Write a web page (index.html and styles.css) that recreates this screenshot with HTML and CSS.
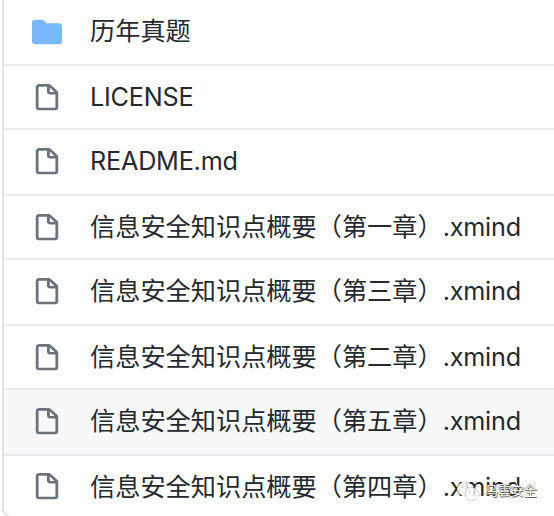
FILE: index.html
```
<!DOCTYPE html>
<html lang="zh-CN">
<head>
<meta charset="utf-8">
<title>Files</title>
<link rel="stylesheet" href="styles.css">
</head>
<body>
<svg class="defs" aria-hidden="true">
<symbol id="file" viewBox="0 0 16 16" preserveAspectRatio="none"><path d="M3.75 1.5a.25.25 0 00-.25.25v11.5c0 .138.112.25.25.25h8.5a.25.25 0 00.25-.25V6H9.75A1.75 1.75 0 018 4.25V1.5H3.75zm5.75.56v2.19c0 .138.112.25.25.25h2.19L9.5 2.06zM2 1.75C2 .784 2.784 0 3.75 0h5.086c.464 0 .909.184 1.237.513l3.414 3.414c.329.328.513.773.513 1.237v8.086A1.75 1.75 0 0112.25 15h-8.5A1.75 1.75 0 012 13.25V1.75z"/></symbol>
<symbol id="folder" viewBox="0 0 16 16" preserveAspectRatio="none"><path d="M1.75 1A1.75 1.75 0 000 2.75v10.5C0 14.216.784 15 1.75 15h12.5A1.75 1.75 0 0016 13.25v-8.5A1.75 1.75 0 0014.25 3h-6.5a.25.25 0 01-.2-.1l-.9-1.2c-.33-.44-.85-.7-1.4-.7h-3.5z"/></symbol>
</svg>
<ul class="files">
<li class="row first"><svg class="icon folder"><use href="#folder"/></svg><span class="name">历年真题</span></li>
<li class="row"><svg class="icon"><use href="#file"/></svg><span class="name"><span class="latin">LICENSE</span></span></li>
<li class="row tall"><svg class="icon"><use href="#file"/></svg><span class="name"><span class="latin">README.md</span></span></li>
<li class="row"><svg class="icon"><use href="#file"/></svg><span class="name">信息安全知识点概要（第一章）<span class="latin">.xmind</span></span></li>
<li class="row tall"><svg class="icon"><use href="#file"/></svg><span class="name">信息安全知识点概要（第三章）<span class="latin">.xmind</span></span></li>
<li class="row"><svg class="icon"><use href="#file"/></svg><span class="name">信息安全知识点概要（第二章）<span class="latin">.xmind</span></span></li>
<li class="row tall hover"><svg class="icon"><use href="#file"/></svg><span class="name">信息安全知识点概要（第五章）<span class="latin">.xmind</span></span></li>
<li class="row last"><svg class="icon"><use href="#file"/></svg><span class="name">信息安全知识点概要（第四章）<span class="latin">.xmind</span></span></li>
</ul>
<div class="watermark">
<svg class="wechat" viewBox="0 0 26 22"><ellipse class="bubble back" cx="9" cy="8" rx="8" ry="7"/><ellipse class="bubble" cx="16" cy="13" rx="7" ry="6.5"/><path class="eyes" d="M6 6h1M11 6h1M13 11h1M18 11h1"/></svg>
<span class="brand">乌雲安全</span>
</div>
</body>
</html>
```
FILE: styles.css
```
* { box-sizing: border-box; }
body {
  margin: 0;
  height: 516px;
  overflow: hidden;
  background: #fff;
  color: #24292e;
  font-family: Inter, "Noto Sans CJK SC", sans-serif;
  font-size: 25.2px;
}
.defs { position: absolute; width: 0; height: 0; }
.files {
  list-style: none;
  margin: 0 0 0 2px;
  padding: 0;
  height: 518px;
  border-left: 2px solid #e1e4e8;
  border-bottom: 2px solid #e1e4e8;
  border-bottom-left-radius: 10px;
  overflow: hidden;
}
.row {
  display: flex;
  align-items: flex-start;
  height: 64px;
  padding: 18px 0 0 28px;
  border-bottom: 2px solid #eaecef;
}
.row.first, .row.tall { height: 66px; }
.row.last { border-bottom: 0; height: 62px; padding-top: 17px; }
.row.hover { background: #f6f8fa; }
.icon { width: 30px; height: 28px; flex: none; fill: #6a737d; }
.folder { fill: #79b8ff; }
.name {
  margin: -1px 0 0 28px;
  line-height: 28px;
  height: 28px;
  white-space: nowrap;
}
.last .name { margin-top: 0; }
.latin { letter-spacing: -.2px; }
.watermark {
  position: absolute;
  left: 456px;
  top: 481px;
  display: flex;
  gap: 3px;
}
.wechat { width: 26px; height: 22px; }
.bubble { fill: #fff; fill-opacity: .85; stroke: #999; stroke-width: .6; stroke-dasharray: 2 1; }
.back { stroke: none; }
.eyes { stroke: #777; stroke-width: 1.2; }
.brand {
  font-size: 13px;
  line-height: 19px;
  color: #fff;
  text-shadow: 0 0 1px #444, .5px .5px 0 #666, -.5px -.5px 0 #888;
}
```
